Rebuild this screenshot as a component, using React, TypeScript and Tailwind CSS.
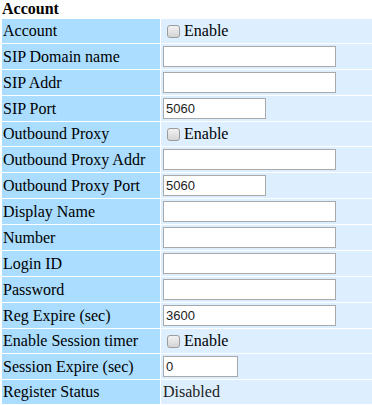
import React from 'react';

type Fila =
   | { etiqueta: string; tipo: 'check' }
   | { etiqueta: string; tipo: 'input'; valor?: string; ancho: 'l' | 'm' | 's' }
   | { etiqueta: string; tipo: 'texto'; valor: string };

const filas: Fila[] = [
   { etiqueta: 'Account', tipo: 'check' },
   { etiqueta: 'SIP Domain name', tipo: 'input', ancho: 'l' },
   { etiqueta: 'SIP Addr', tipo: 'input', ancho: 'l' },
   { etiqueta: 'SIP Port', tipo: 'input', valor: '5060', ancho: 'm' },
   { etiqueta: 'Outbound Proxy', tipo: 'check' },
   { etiqueta: 'Outbound Proxy Addr', tipo: 'input', ancho: 'l' },
   { etiqueta: 'Outbound Proxy Port', tipo: 'input', valor: '5060', ancho: 'm' },
   { etiqueta: 'Display Name', tipo: 'input', ancho: 'l' },
   { etiqueta: 'Number', tipo: 'input', ancho: 'l' },
   { etiqueta: 'Login ID', tipo: 'input', ancho: 'l' },
   { etiqueta: 'Password', tipo: 'input', ancho: 'l' },
   { etiqueta: 'Reg Expire (sec)', tipo: 'input', valor: '3600', ancho: 'l' },
   { etiqueta: 'Enable Session timer', tipo: 'check' },
   { etiqueta: 'Session Expire (sec)', tipo: 'input', valor: '0', ancho: 's' },
   { etiqueta: 'Register Status', tipo: 'texto', valor: 'Disabled' },
];

const anchos = {
   l: 'w-[173px]',
   m: 'w-[103px]',
   s: 'w-[75px]',
};

function Casilla() {
   return (
      <span className="ml-[6px] mr-[4px] inline-block h-[13px] w-[13px] rounded-[3px] border border-[#9c9c9c] bg-gradient-to-b from-[#f2f2f2] to-[#d4d4d4]" />
   );
}

function Valor({ fila }: { fila: Fila }) {
   if (fila.tipo === 'check') {
      return (
         <div className="flex h-[24px] items-center">
            <Casilla />
            <span>Enable</span>
         </div>
      );
   }
   if (fila.tipo === 'input') {
      return (
         <div className="flex h-[25px] items-center pl-[2px]">
            <input
               readOnly
               value={fila.valor ?? ''}
               className={`${anchos[fila.ancho]} h-[21px] border border-[#a9a9a9] bg-white px-[2px] [font-family:'Liberation_Sans',Arial,sans-serif] text-[13px] text-[#222] outline-none`}
            />
         </div>
      );
   }
   return <div className="flex h-[24px] items-center pl-[2px] text-[#222]">{fila.valor}</div>;
}

export default function App() {
   return (
      <div className="w-[372px] bg-white [font-family:'Liberation_Serif','Times_New_Roman',serif] text-[16px] text-black">
         <div className="h-[19px] pl-[2px] font-bold leading-[18px]">Account</div>
         <div className="grid grid-cols-[158px_1fr] gap-px pl-[2px]">
            {filas.map((fila) => (
               <React.Fragment key={fila.etiqueta}>
                  <div className="flex items-center bg-[#aaddff] pl-[1px]">{fila.etiqueta}</div>
                  <div className="bg-[#ddeeff]">
                     <Valor fila={fila} />
                  </div>
               </React.Fragment>
            ))}
         </div>
      </div>
   );
}
